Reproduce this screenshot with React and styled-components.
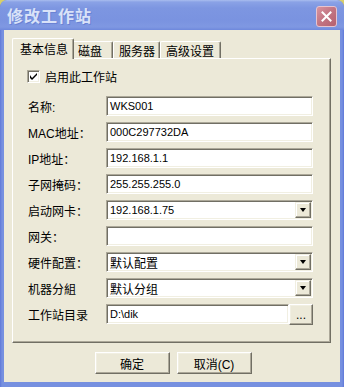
import React from 'react';
import styled, { createGlobalStyle } from 'styled-components';

const GlobalStyle = createGlobalStyle`
    html, body {
        margin: 0;
        padding: 0;
        background: #d8cf6a;
    }
    body {
        font-family: "Liberation Sans", "Noto Sans CJK SC", sans-serif;
        font-size: 12px;
        color: #000;
    }
`

const Window = styled.div`
    width: 344px;
    height: 387px;
    box-sizing: border-box;
    border-radius: 7px 7px 0 0;
    background: linear-gradient(to right, #5f78d8 0, #7690e0 2px, #7690e0 calc(100% - 2px), #5f78d8 100%);
    padding: 0 4px 5px 4px;
    display: flex;
    flex-direction: column;
    overflow: hidden;
`

const TitleBar = styled.div`
    height: 30px;
    margin: 0 -4px;
    padding: 0 7px 0 7px;
    display: flex;
    align-items: center;
    justify-content: space-between;
    background: linear-gradient(to bottom, #a9bdef 0, #8aa2e6 2px, #7d96e1 8px, #7a93e0 20px, #7f98e2 27px, #6e88dc 30px);
    border-radius: 7px 7px 0 0;
`

const Title = styled.span`
    font-family: "Noto Sans CJK SC", sans-serif;
    font-size: 16px;
    font-weight: bold;
    letter-spacing: 1px;
    color: #d9e2f8;
    text-shadow: 1px 1px 0 #6a82d4;
    line-height: 30px;
`

const CloseButton = styled.div`
    width: 19px;
    height: 19px;
    border: 1px solid #e6c4cf;
    border-radius: 3px;
    background: linear-gradient(135deg, #d8949f 0, #c27482 50%, #b5606f 100%);
    display: flex;
    align-items: center;
    justify-content: center;
    margin-top: 2px;
`

const Client = styled.div`
    flex: 1;
    background: #ece9d8;
    padding: 8px 9px 8px 8px;
    display: flex;
    flex-direction: column;
`

const TabStrip = styled.div`
    display: flex;
    align-items: flex-end;
    height: 20px;
    padding-left: 2px;
`

const Tab = styled.div`
    position: relative;
    z-index: ${props => props.active ? 2 : 1};
    box-sizing: border-box;
    height: ${props => props.active ? '21px' : '17px'};
    margin: ${props => props.active ? '0 -2px -1px -2px' : '0'};
    padding: ${props => props.active ? '2px 7px 0 7px' : '1px 5px 0 5px'};
    background: #ece9d8;
    border-top: 1px solid #fff;
    border-left: 1px solid #fff;
    border-right: 1px solid #716f64;
    border-radius: 2px 2px 0 0;
    box-shadow: inset -1px 0 0 #aca899;
    font-family: "Noto Sans CJK SC", sans-serif;
    font-size: 12px;
    line-height: 15px;
    white-space: nowrap;
    width: ${props => props.width}px;
`

const Panel = styled.div`
    flex: 1;
    border: 1px solid;
    border-color: #fff #716f64 #716f64 #fff;
    box-shadow: inset -1px -1px 0 #aca899;
    padding: 11px 0 0 14px;
`

const CheckRow = styled.label`
    display: flex;
    align-items: center;
    height: 13px;
    gap: 5px;
    font-family: "Noto Sans CJK SC", sans-serif;
    font-size: 12px;
`

const CheckBox = styled.span`
    width: 13px;
    height: 13px;
    box-sizing: border-box;
    border: 1px solid;
    border-color: #aca899 #fff #fff #aca899;
    box-shadow: inset 1px 1px 0 #716f64, inset -1px -1px 0 #f1efe2;
    background: #fff;
    display: flex;
    align-items: center;
    justify-content: center;
`

const Form = styled.div`
    margin-top: 13px;
    display: grid;
    grid-template-columns: 79px 207px;
    grid-auto-rows: 20px;
    row-gap: 6px;
`

const Label = styled.div`
    display: flex;
    align-items: center;
    padding-left: 1px;
    font-family: "Liberation Sans", "Noto Sans CJK SC", sans-serif;
    font-size: 12px;
    white-space: nowrap;
`

const Field = styled.div`
    box-sizing: border-box;
    height: 20px;
    border: 1px solid;
    border-color: #aca899 #fff #fff #aca899;
    box-shadow: inset 1px 1px 0 #716f64, inset -1px -1px 0 #f1efe2;
    background: #fff;
    display: flex;
    align-items: center;
    padding: 0 2px 0 3px;
    font-family: ${props => props.cjk ? '"Noto Sans CJK SC", sans-serif' : '"Liberation Sans", sans-serif'};
    font-size: ${props => props.cjk ? '12px' : '11px'};
    white-space: nowrap;
    flex: 1;
`

const FieldText = styled.span`
    flex: 1;
`

const DropButton = styled.span`
    width: 16px;
    height: 16px;
    box-sizing: border-box;
    border: 1px solid;
    border-color: #f1efe2 #716f64 #716f64 #f1efe2;
    box-shadow: inset -1px -1px 0 #aca899, inset 1px 1px 0 #fff;
    background: #ece9d8;
    display: flex;
    align-items: center;
    justify-content: center;
    margin-right: -1px;
`

const Arrow = styled.span`
    width: 0;
    height: 0;
    border-left: 3.5px solid transparent;
    border-right: 3.5px solid transparent;
    border-top: 4px solid #000;
`

const DirRow = styled.div`
    display: flex;
    align-items: flex-start;
`

const RaisedButton = styled.button`
    box-sizing: border-box;
    width: ${props => props.width}px;
    height: ${props => props.height}px;
    border: 1px solid;
    border-color: #fff #716f64 #716f64 #fff;
    box-shadow: inset -1px -1px 0 #aca899, inset 1px 1px 0 #f1efe2;
    background: #ece9d8;
    padding: 0;
    font-family: "Liberation Sans", "Noto Sans CJK SC", sans-serif;
    font-size: 12px;
    color: #000;
    display: flex;
    align-items: center;
    justify-content: center;
`

const Footer = styled.div`
    margin-top: 9px;
    display: flex;
    justify-content: center;
    gap: 7px;
    padding-left: 3px;
`

const rows = [
    { label: '名称:', value: 'WKS001' },
    { label: 'MAC地址：', value: '000C297732DA' },
    { label: 'IP地址：', value: '192.168.1.1' },
    { label: '子网掩码：', value: '255.255.255.0' },
    { label: '启动网卡：', value: '192.168.1.75', combo: true },
    { label: '网关：', value: '' },
    { label: '硬件配置：', value: '默认配置', combo: true, cjk: true },
    { label: '机器分組', value: '默认分组', combo: true, cjk: true },
]

const App = () => {
    return (
        <>
            <GlobalStyle />
            <Window>
                <TitleBar>
                    <Title>修改工作站</Title>
                    <CloseButton>
                        <svg width="11" height="11" viewBox="0 0 11 11">
                            <path d="M1.5 1.5 L9.5 9.5 M9.5 1.5 L1.5 9.5" stroke="#fff" strokeWidth="2" strokeLinecap="square" />
                        </svg>
                    </CloseButton>
                </TitleBar>
                <Client>
                    <TabStrip>
                        <Tab active width={62}>基本信息</Tab>
                        <Tab width={41}>磁盘</Tab>
                        <Tab width={47}>服务器</Tab>
                        <Tab width={61}>高级设置</Tab>
                    </TabStrip>
                    <Panel>
                        <CheckRow>
                            <CheckBox>
                                <svg width="7" height="7" viewBox="0 0 7 7">
                                    <path d="M0 2 L0 5 L2 7 L7 2 L7 0 L2 5 Z" fill="#000" />
                                </svg>
                            </CheckBox>
                            启用此工作站
                        </CheckRow>
                        <Form>
                            {rows.map(r => (
                                <React.Fragment key={r.label}>
                                    <Label>{r.label}</Label>
                                    <Field cjk={r.cjk}>
                                        <FieldText>{r.value}</FieldText>
                                        {r.combo && <DropButton><Arrow /></DropButton>}
                                    </Field>
                                </React.Fragment>
                            ))}
                            <Label>工作站目录</Label>
                            <DirRow>
                                <Field>
                                    <FieldText>D:\dik</FieldText>
                                </Field>
                                <RaisedButton width={24} height={21}>...</RaisedButton>
                            </DirRow>
                        </Form>
                    </Panel>
                    <Footer>
                        <RaisedButton width={75} height={22}>确定</RaisedButton>
                        <RaisedButton width={75} height={22}>取消(C)</RaisedButton>
                    </Footer>
                </Client>
            </Window>
        </>
    )
}

export default App
